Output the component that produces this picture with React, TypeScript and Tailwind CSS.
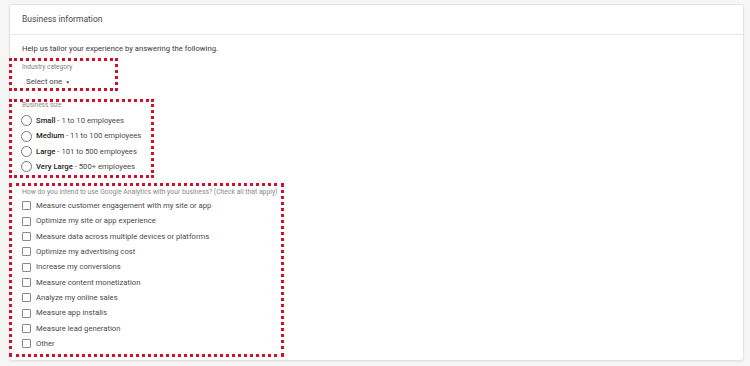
import React from 'react';

const sizes = [
  { name: 'Small', desc: '1 to 10 employees' },
  { name: 'Medium', desc: '11 to 100 employees' },
  { name: 'Large', desc: '101 to 500 employees' },
  { name: 'Very Large', desc: '500+ employees' },
];

const uses = [
  'Measure customer engagement with my site or app',
  'Optimize my site or app experience',
  'Measure data across multiple devices or platforms',
  'Optimize my advertising cost',
  'Increase my conversions',
  'Measure content monetization',
  'Analyze my online sales',
  'Measure app installs',
  'Measure lead generation',
  'Other',
];

const App: React.FC = () => {
  return (
    <div className="w-[750px] h-[366px] bg-[#f6f6f6] pt-[4px] pl-[9px] font-['Roboto','Liberation_Sans',sans-serif] text-[#444]">
      <div className="w-[735px] h-[357px] bg-white border border-[#e2e2e2] rounded-[3px] shadow-[0_1px_2px_rgba(0,0,0,0.06)]">
        <div className="h-[30px] border-b border-[#e8e8e8] pl-[12px] flex items-center text-[8.5px] text-[#4a4a4a]">
          Business information
        </div>

        <div className="flex flex-col">
          <p className="pl-[12px] pt-[9px] h-[23px] text-[7.7px] leading-[10px] text-[#3a3a3a]">
            Help us tailor your experience by answering the following.
          </p>

          {/* industry */}
          <div className="w-[109px] h-[33px] -ml-px border-[3px] border-dotted border-[#d0112b] pl-[10px] flex flex-col">
            <span className="text-[6.5px] leading-[8px] text-[#808080] pt-[2px]">Industry category</span>
            <span className="pl-[4px] pt-[6px] text-[7.8px] leading-[10px] text-[#444] flex items-center gap-[3px]">
              Select one
              <span className="text-[5px] text-[#555]">▼</span>
            </span>
          </div>

          {/* business size */}
          <div className="mt-[8px] w-[145px] h-[79px] -ml-px border-[3px] border-dotted border-[#d0112b] pl-[10px] flex flex-col">
            <span className="text-[6.5px] leading-[8px] text-[#8a8a8a] -mt-[1px]">Business size</span>
            <div className="flex flex-col pt-[4px] -ml-[1px]">
              {sizes.map((s) => (
                <div key={s.name} className="h-[15.4px] flex items-center gap-[4px] text-[7.7px] text-[#4a4a4a]">
                  <span className="w-[11px] h-[11px] rounded-full border border-[#7a7a7a] bg-white shrink-0" />
                  <span className="whitespace-nowrap">
                    <span className="font-medium text-[#222]">{s.name}</span> - {s.desc}
                  </span>
                </div>
              ))}
            </div>
          </div>

          {/* usage */}
          <div className="mt-[5px] w-[275px] h-[174px] -ml-px border-[3px] border-dotted border-[#d0112b] pl-[10px] flex flex-col">
            <span className="text-[6.8px] leading-[8px] text-[#8a8a8a] pt-[2px] whitespace-nowrap">
              How do you intend to use Google Analytics with your business? (Check all that apply)
            </span>
            <div className="flex flex-col pt-[2px]">
              {uses.map((u) => (
                <div key={u} className="h-[15.35px] flex items-center gap-[5px] text-[7.7px] text-[#4a4a4a]">
                  <span className="w-[9px] h-[9px] rounded-[1px] border border-[#8a8a8a] bg-white shrink-0" />
                  <span className="whitespace-nowrap">{u}</span>
                </div>
              ))}
            </div>
          </div>
        </div>
      </div>
    </div>
  );
};

export default App;
